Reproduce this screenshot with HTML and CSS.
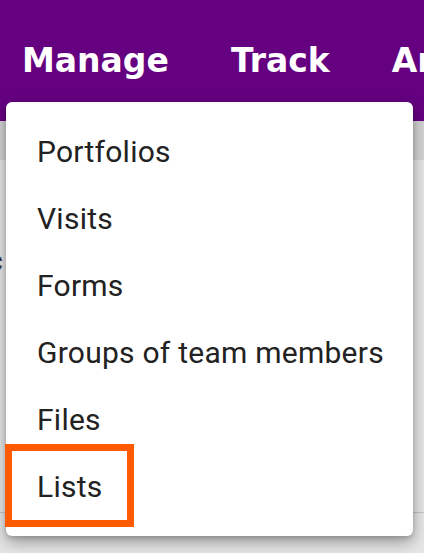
FILE: index.html
```html
<!DOCTYPE html>
<html>
<head>
<meta charset="utf-8">
<link rel="stylesheet" href="styles.css">
</head>
<body>
<div class="page">
  <header class="topbar">
    <nav class="nav">
      <span class="nav-item">Manage</span>
      <span class="nav-item">Track</span>
      <span class="nav-item">Analyze</span>
    </nav>
  </header>
  <div class="subbar"></div>
  <div class="content">
    <div class="frag-row"><span class="frag">c</span></div>
    <div class="rule"></div>
  </div>

  <div class="menu">
    <div class="menu-item">Portfolios</div>
    <div class="menu-item">Visits</div>
    <div class="menu-item">Forms</div>
    <div class="menu-item">Groups of team members</div>
    <div class="menu-item">Files</div>
    <div class="menu-item">Lists</div>
    <div class="highlight"></div>
  </div>
</div>
</body>
</html>
```

FILE: styles.css
```css
html, body {
  margin: 0;
  padding: 0;
}
body {
  width: 424px;
  height: 553px;
  overflow: hidden;
  background: #e4e4e4;
}
.page {
  position: relative;
  width: 424px;
  height: 553px;
  overflow: hidden;
}
.topbar {
  height: 121px;
  background: #650080;
  box-sizing: border-box;
  padding-top: 41px;
}
.nav {
  display: flex;
  gap: 62px;
  padding-left: 22px;
  white-space: nowrap;
}
.nav-item {
  font-family: "DejaVu Sans", sans-serif;
  font-weight: bold;
  font-size: 33px;
  line-height: 40px;
  color: #ffffff;
}
.subbar {
  height: 39px;
  background: #d3d3d3;
}
.content {
  background: #e6e6e6;
  height: 393px;
  display: flex;
  flex-direction: column;
}
.frag-row {
  height: 90px;
  padding-top: 86px;
  box-sizing: content-box;
}
.frag {
  display: block;
  margin-left: -13px;
  font-family: "Roboto", sans-serif;
  font-weight: bold;
  font-size: 30px;
  line-height: 30px;
  color: #3a3a3a;
}
.rule {
  margin-top: 176px;
  height: 1px;
  background: #c4c4c4;
}
.menu {
  position: absolute;
  top: 102px;
  left: 6px;
  width: 407px;
  box-sizing: border-box;
  padding: 16px 0;
  background: #ffffff;
  border-radius: 6px;
  box-shadow: 0 6px 16px rgba(0, 0, 0, 0.35), 0 2px 4px rgba(0, 0, 0, 0.15);
}
.menu-item {
  height: 67px;
  line-height: 68px;
  padding-left: 31px;
  font-family: "Roboto", sans-serif;
  font-size: 30px;
  letter-spacing: 0.25px;
  color: #222222;
  white-space: nowrap;
}
.highlight {
  position: absolute;
  left: -1px;
  top: 342px;
  width: 129px;
  height: 83px;
  box-sizing: border-box;
  border: 7px solid #ff5a00;
}
```
